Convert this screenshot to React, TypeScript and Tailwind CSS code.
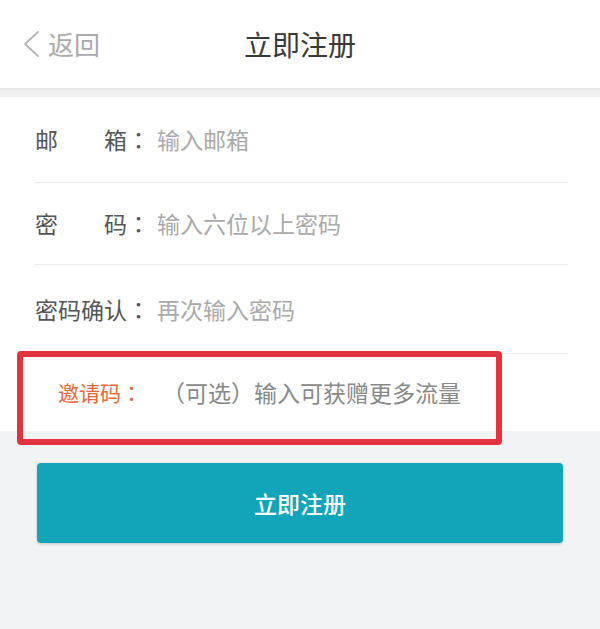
const font = { fontFamily: '"Noto Sans CJK SC", "Noto Sans", sans-serif' };

const rows = [
  { label: '邮箱', placeholder: '输入邮箱', h: 'h-[85px]' },
  { label: '密码', placeholder: '输入六位以上密码', h: 'h-[81px]' },
  { label: '密码确认', placeholder: '再次输入密码', h: 'h-[88px]' },
];

export default function App() {
  return (
    <div className="min-h-[629px] bg-[#f2f3f4]" style={font}>
      {/* Header */}
      <div className="relative h-[88px] bg-white flex items-center justify-center">
        <div className="absolute left-[22px] top-[30px] flex items-center text-[#aaaaaa]">
          <svg width="20" height="28" viewBox="0 0 20 28" fill="none">
            <polyline points="16,2 3,14 16,26" stroke="#b4b4b4" strokeWidth="1.8" strokeLinecap="round" strokeLinejoin="round" />
          </svg>
          <span className="ml-[6px] text-[26px] leading-none">返回</span>
        </div>
        <h1 className="text-[28px] text-[#3a3a3a] leading-none">立即注册</h1>
      </div>
      <div className="h-[9px] bg-[#f0f0f0] border-t-2 border-[#e8e8e8]" />

      {/* Form */}
      <div className="relative bg-white">
        {rows.map((r) => (
          <div key={r.label} className="mx-[35px] mr-[32px] border-b border-[#ececec]">
            <div className={`${r.h} flex items-center text-[23px]`}>
              <span className="w-[92px] text-[#555555] [text-align-last:justify] leading-none">{r.label}</span>
              <span className="w-[23px] text-center text-[#555555] leading-none font-['Noto_Sans_CJK_TC',sans-serif]">：</span>
              <span className="ml-[7px] text-[#aaaaaa] leading-none">{r.placeholder}</span>
            </div>
          </div>
        ))}
        <div className="h-[77px] flex items-center pl-[58px]">
          <span className="text-[21px] text-[#e2693c] leading-none">邀请码</span>
          <span className="w-[21px] text-[21px] text-center text-[#e2693c] leading-none font-['Noto_Sans_CJK_TC',sans-serif]">：</span>
          <span className="ml-[20px] text-[23px] text-[#888888] leading-none">（可选）输入可获赠更多流量</span>
        </div>
        {/* highlight box */}
        <div className="absolute left-[17px] top-[254px] w-[485px] h-[94px] border-[6px] border-[#e3333f] rounded-[4px]" />
      </div>

      {/* Button */}
      <div className="px-[37px] pt-[32px]">
        <button className="w-full h-[80px] rounded-[4px] bg-[#12a5b9] shadow-[0_1px_3px_rgba(0,0,0,0.2)] text-white text-[23px] font-medium">
          立即注册
        </button>
      </div>
    </div>
  );
}
